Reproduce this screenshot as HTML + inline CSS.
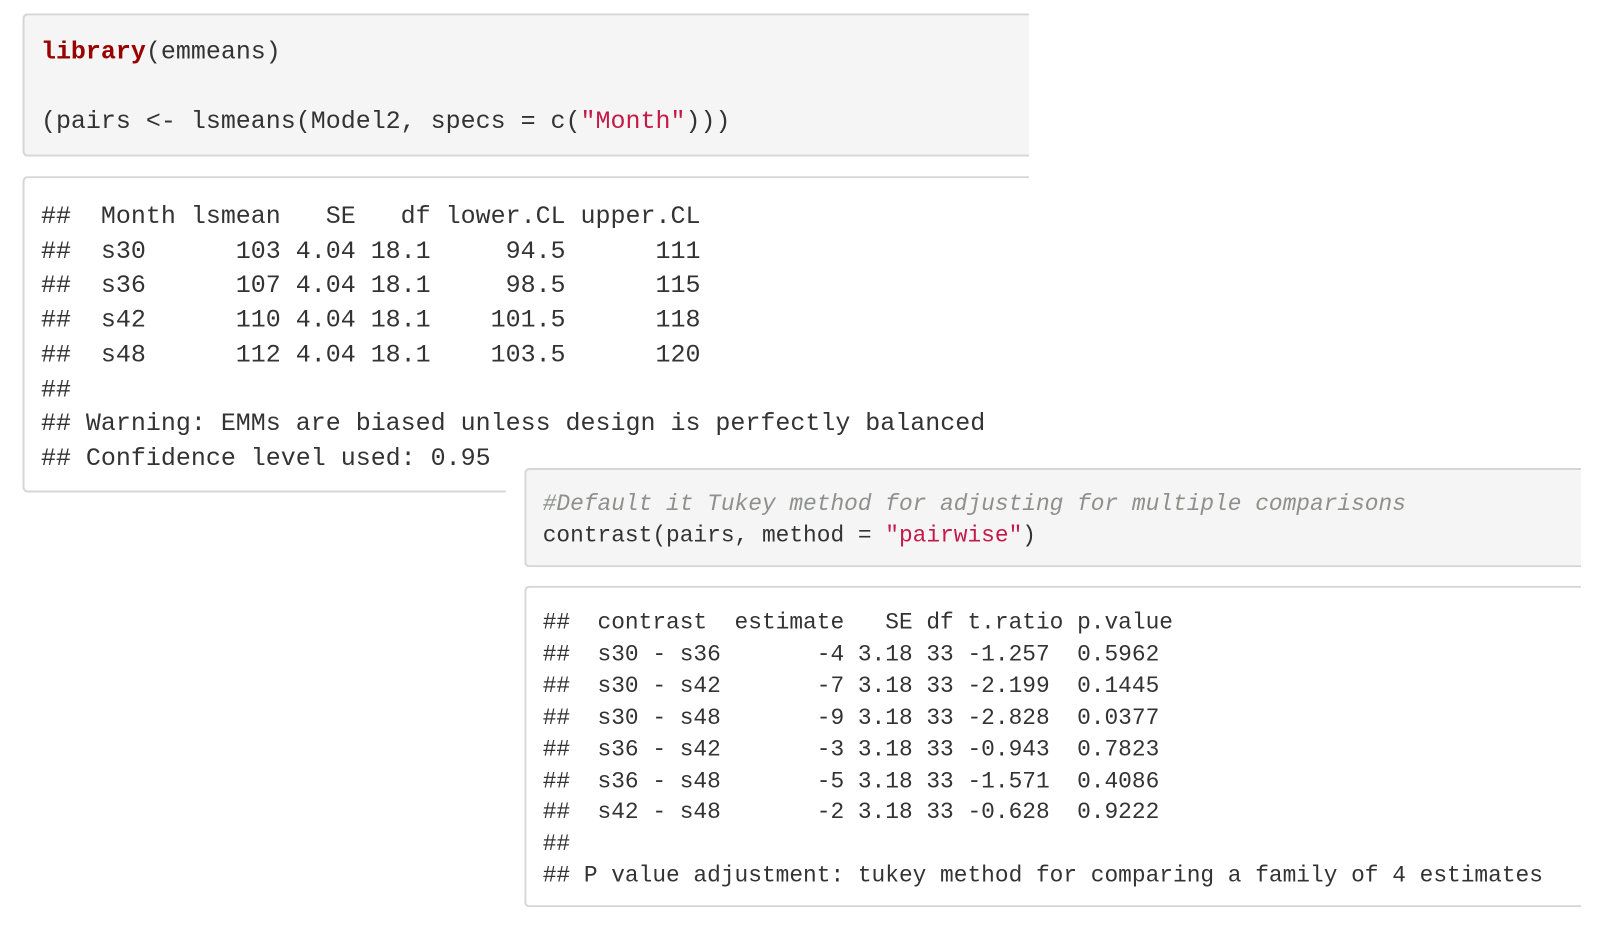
<!DOCTYPE html>
<html><head><meta charset="utf-8"><style>
body{margin:0;width:1606px;height:924px;background:#fff;position:relative;overflow:hidden;font-family:"Liberation Mono",monospace;color:#333;}
#w{position:absolute;left:0;top:0;width:1606px;height:924px;transform:scale(1.024);transform-origin:0 0;}
.b{position:absolute;box-sizing:border-box;}
.t{position:absolute;white-space:pre;margin:0;}
.kw{color:#900;font-weight:bold}
.st{color:#c41a4a}
.cm{color:#8e908c;font-style:italic}
</style></head><body><div id="w">
<div class="b" style="left:22px;top:13px;width:983px;height:140px;background:#f5f5f5;border:2px solid #d6d6d6;border-right:none;border-radius:5px 0 0 5px"></div>
<pre class="t" style="left:40px;top:35px;font-size:24.4px;line-height:34px"><span class="kw">library</span>(emmeans)

(pairs &lt;- lsmeans(Model2, specs = c(<span class="st">"Month"</span>)))</pre>

<div class="b" style="left:22px;top:172px;width:983px;height:309px;background:#fff;border:2px solid #d6d6d6;border-right:none;border-radius:5px 0 0 5px"></div>
<div class="b" style="left:494px;top:455px;width:20px;height:30px;background:#fff"></div>
<pre class="t" style="left:40px;top:196px;font-size:24.4px;line-height:33.7px">##  Month lsmean   SE   df lower.CL upper.CL
##  s30      103 4.04 18.1     94.5      111
##  s36      107 4.04 18.1     98.5      115
##  s42      110 4.04 18.1    101.5      118
##  s48      112 4.04 18.1    103.5      120
##
## Warning: EMMs are biased unless design is perfectly balanced
## Confidence level used: 0.95</pre>

<div class="b" style="left:512px;top:457px;width:1032px;height:97px;background:#f5f5f5;border:2px solid #d6d6d6;border-right:none;border-radius:5px 0 0 5px"></div>
<pre class="t" style="left:530px;top:477px;font-size:22.3px;line-height:31px"><span class="cm">#Default it Tukey method for adjusting for multiple comparisons</span>
contrast(pairs, method = <span class="st">"pairwise"</span>)</pre>

<div class="b" style="left:512px;top:572px;width:1032px;height:314px;background:#fff;border:2px solid #d6d6d6;border-right:none;border-radius:5px 0 0 5px"></div>
<pre class="t" style="left:530px;top:593px;font-size:22.3px;line-height:30.9px">##  contrast  estimate   SE df t.ratio p.value
##  s30 - s36       -4 3.18 33 -1.257  0.5962
##  s30 - s42       -7 3.18 33 -2.199  0.1445
##  s30 - s48       -9 3.18 33 -2.828  0.0377
##  s36 - s42       -3 3.18 33 -0.943  0.7823
##  s36 - s48       -5 3.18 33 -1.571  0.4086
##  s42 - s48       -2 3.18 33 -0.628  0.9222
##
## P value adjustment: tukey method for comparing a family of 4 estimates</pre>
</div></body></html>
